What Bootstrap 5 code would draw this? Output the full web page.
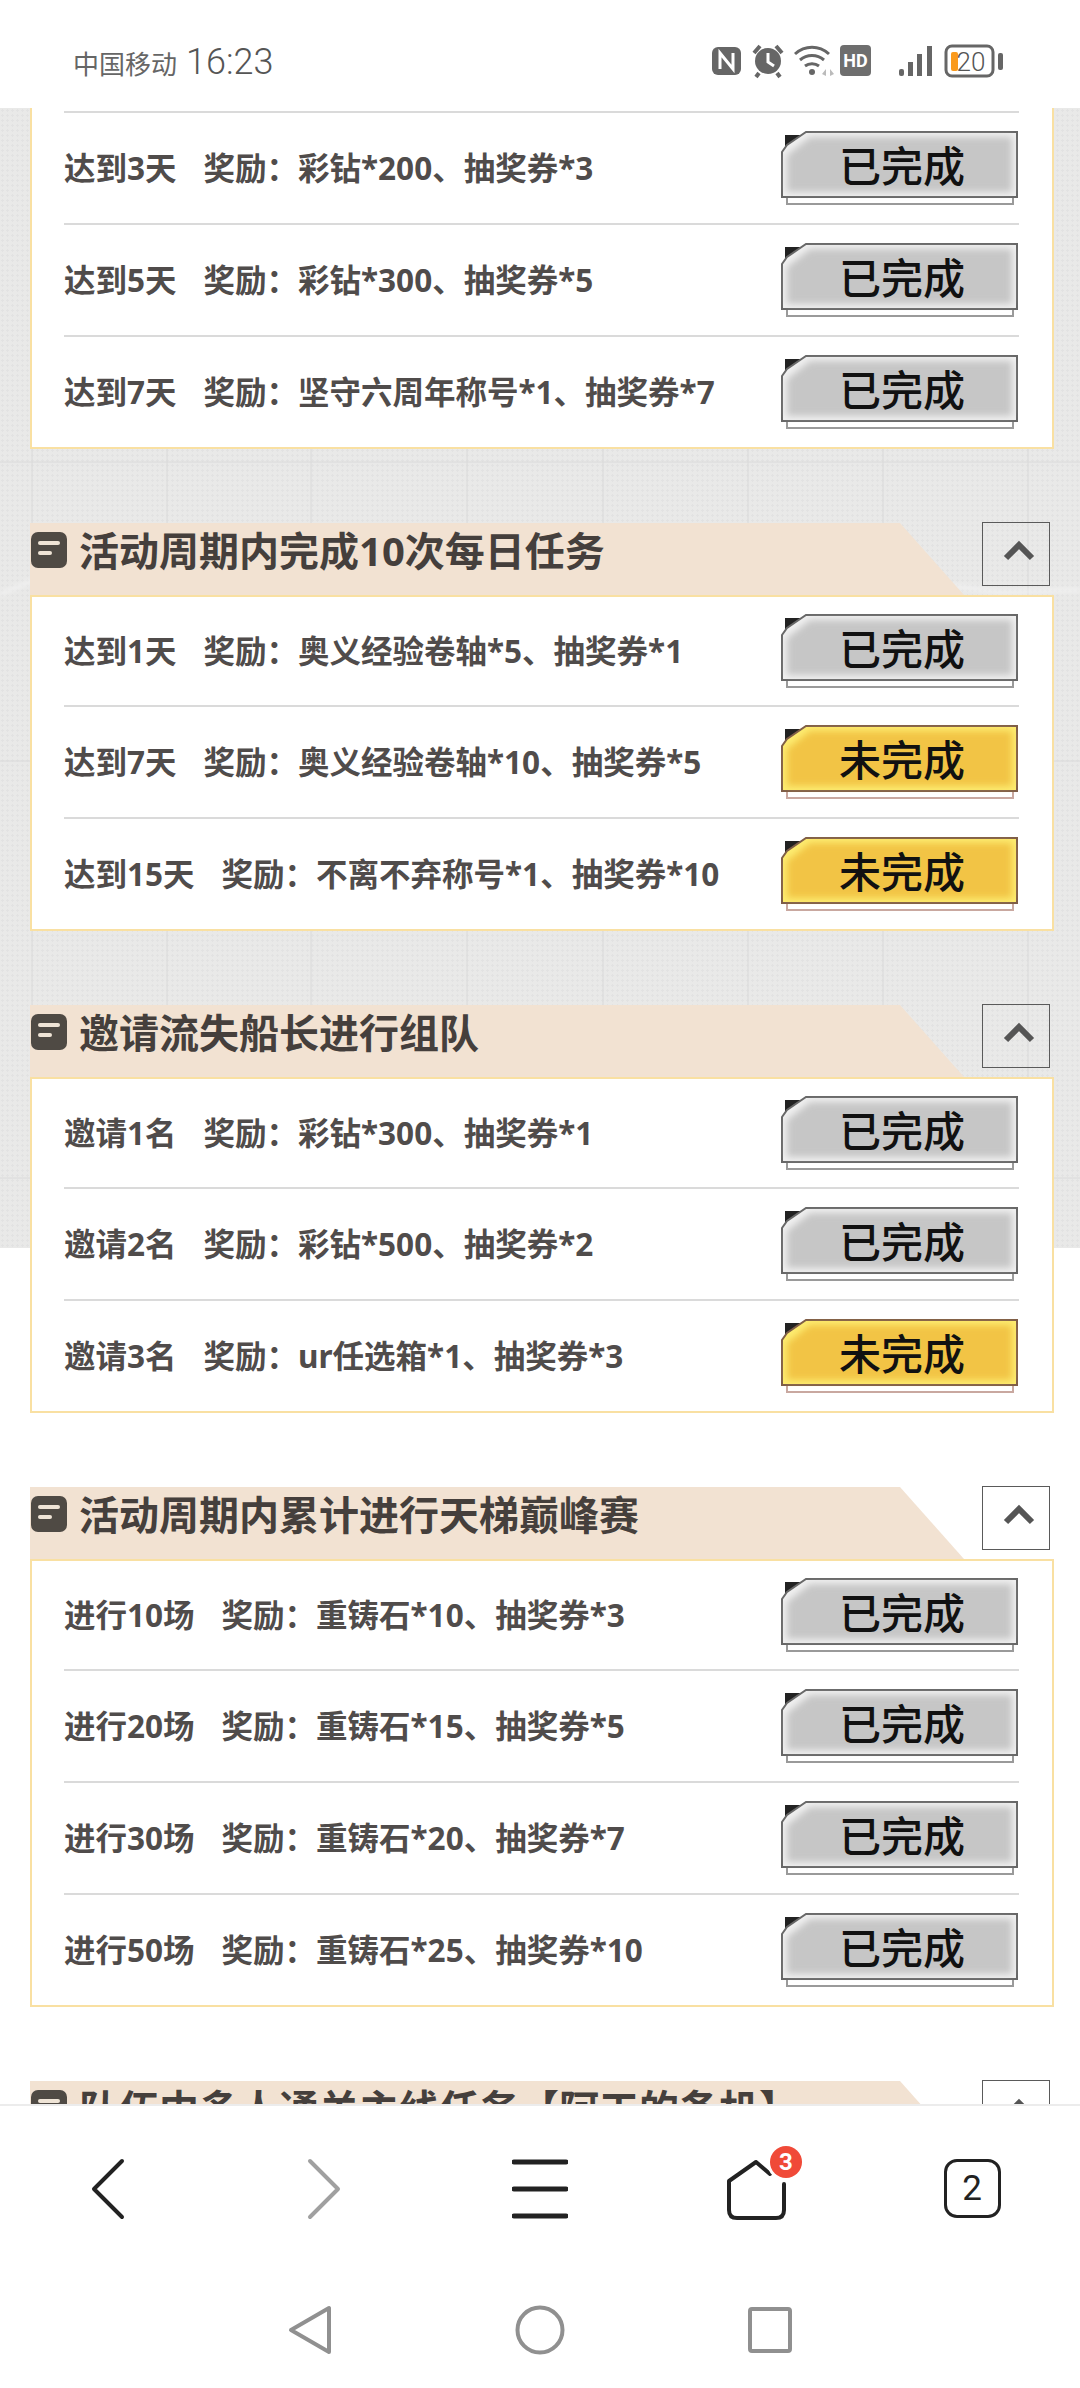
<!DOCTYPE html>
<html lang="zh">
<head>
<meta charset="UTF-8">
<title>活动任务</title>
<link href="https://cdn.jsdelivr.net/npm/bootstrap@5.3.0/dist/css/bootstrap.min.css" rel="stylesheet">
<style>
    html, body { width: 1080px; height: 2388px; overflow: hidden; background: #fff; }
    body { font-family: "Noto Sans", "Noto Sans CJK SC", sans-serif; color: #4a4644; }

    /* status bar */
    .status-bar { height: 108px; background: #fff; position: relative; z-index: 2; padding: 0 77px 0 73px; color: #666; }
    .status-left { margin-top: 16px; }
    .status-right { margin-top: 14px; display: block; }
    .carrier { font-size: 26px; font-family: "Noto Sans CJK SC", sans-serif; margin-right: 9px; }
    .clock { font-size: 36px; line-height: 40px; font-family: Roboto, sans-serif; font-weight: 300; color: #555; }

    /* scrolled page */
    .page-view { height: 1996px; position: relative; overflow: hidden; background: #fff; }
    .paper-bg {
        position: absolute; left: 0; right: 0; top: 0; height: 1140px;
        background-color: #e9e9e8;
        background-image: radial-gradient(#e2e2e2 1.200px, transparent 1.300px);
        background-size: 5px 5px;
    }
    .paper-lines { position: absolute; left: 0; top: 0; }
    .task-list { position: relative; }
    .sec-head { height: 72px; padding-left: 30px; }
    .sec-band {
        width: 934px; height: 72px; background: #f2e2d2;
        clip-path: polygon(0 0, 870px 0, 934px 72px, 0 72px);
        padding: 8px 0 0 1px; overflow: hidden; white-space: nowrap;
    }
    .sec-icon { width: 36px; height: 36px; border-radius: 7px; background: #4f4a44; margin-right: 12px; flex-shrink: 0; margin-top: 1px; padding: 9px 7px 0; }
    .sec-icon i { display: block; height: 4px; border-radius: 2px; background: #efe4d6; margin-bottom: 6px; }
    .sec-icon i + i { width: 14px; }
    .sec-title { font-size: 40px; font-weight: 700; line-height: 40px; color: #453f3c; }
    .toggle-box { width: 68px; height: 64px; margin: -1px 0 0 18px; border: 1px solid #5a5a5a; }
    .toggle-box svg { display: block; }
    .task-panel { width: 1024px; margin: 0 26px 74px 30px; background: #fff; border: 2px solid #f9e0a2; padding: 0 33px 0 32px; }
    .task-panel.cut-top { border-top: 0; }
    .sep-only { height: 5px; border-bottom: 2px solid #dadada; }
    .task-row { height: 112px; border-bottom: 2px solid #dadada; }
    .task-panel > .task-row:first-child { height: 110px; }
    .task-panel > .task-row:last-child { height: 110px; border-bottom: 0; }
    .task-panel > .sep-only + .task-row { height: 112px; }
    .task-name { font-size: 31.500px; font-weight: 700; line-height: 40px; color: #504c4b; white-space: nowrap; }
    .task-need { margin-right: 27px; }
    .task-btn { width: 237px; height: 74px; position: relative; font-family: "Noto Sans CJK SC", sans-serif; flex-shrink: 0; margin-right: 1px; }
    .task-btn svg { position: absolute; left: 0; top: 0; }
    .task-btn span { position: relative; display: block; text-align: center; font-size: 42px; line-height: 40px; padding-top: 13px; padding-left: 5px; color: #111; font-weight: 500; }

    /* browser bars */
    .browser-bar { height: 284px; background: #fff; border-top: 2px solid #ececec; position: relative; z-index: 2; }
    .tool-row { height: 165px; }
    .tool-item { width: 216px; }
    .nav-row { height: 117px; }
    .nav-item-box { width: 230px; }
    .tool-badge { position: absolute; left: 43px; top: -14px; width: 32px; height: 32px; border-radius: 50%; background: #f04a38; color: #fff; font: 700 24px/32px Roboto, sans-serif; text-align: center; box-shadow: 0 0 0 3px #fff; }
    .tab-count { width: 57px; height: 59px; border: 3px solid #222; border-radius: 13px; font: 400 35px/53px Roboto, sans-serif; color: #222; text-align: center; }
    .home-wrap { width: 58px; height: 58px; position: relative; }
</style>
</head>
<body>

<svg width="0" height="0" class="position-absolute">
    <defs>
        <filter id="softEdge" x="-10%" y="-20%" width="120%" height="140%"><feGaussianBlur stdDeviation="3.500"/></filter>
        <symbol id="btnDone" viewBox="0 0 237 74">
            <path d="M6 66H232V73H6Z" fill="#fff" stroke="#9a9a9a" stroke-width="2"/>
            <path d="M4 4H25L4 20Z" fill="#222"/>
            <path d="M25 1H236V66H1V21L6 14Z" fill="#f0f0f0" stroke="#666" stroke-width="2"/>
            <path d="M29 6H231V61H6V24Z" fill="#c6c6c6" filter="url(#softEdge)"/>
        </symbol>
        <symbol id="btnTodo" viewBox="0 0 237 74">
            <path d="M6 66H232V73H6Z" fill="#fff" stroke="#c9a8a0" stroke-width="2"/>
            <path d="M4 4H25L4 20Z" fill="#222"/>
            <path d="M25 1H236V66H1V21L6 14Z" fill="#fdec70" stroke="#7d5c48" stroke-width="2"/>
            <path d="M29 6H231V61H6V24Z" fill="#f2c444" filter="url(#softEdge)"/>
        </symbol>
        <symbol id="chevUp" viewBox="0 0 66 62">
            <path d="M23 35L36 22L49 35" fill="none" stroke="#555" stroke-width="6"/>
        </symbol>
        <filter id="tearBlur"><feGaussianBlur stdDeviation="2"/></filter>
    </defs>
</svg>

<div class="status-bar d-flex align-items-center justify-content-between">
    <div class="status-left d-flex align-items-center">
        <span class="carrier">中国移动</span><span class="clock">16:23</span>
    </div>
    <svg class="status-right" width="295" height="36" viewBox="0 0 295 36">
        <!-- NFC -->
        <rect x="4" y="4" width="29" height="28" rx="6" fill="#666"/>
        <path d="M12 26V10L25 26V10" fill="none" stroke="#fff" stroke-width="3"/>
        <!-- alarm -->
        <circle cx="60" cy="18" r="13" fill="#666"/>
        <path d="M60 10V19L66 23" fill="none" stroke="#fff" stroke-width="3"/>
        <path d="M46 10L52 3M74 10L68 3M51 30L48 34M69 30L72 34" stroke="#666" stroke-width="4" fill="none"/>
        <!-- wifi -->
        <path d="M87 11C97 2 111 2 121 11M92 17C99 11 109 11 116 17M97 23C101 20 107 20 111 23" fill="none" stroke="#666" stroke-width="3"/>
        <circle cx="104" cy="29" r="3" fill="#666"/>
        <path d="M114 31L118 26V33ZM122 26L126 31L122 33Z" fill="#bbb"/>
        <!-- HD -->
        <rect x="132" y="2" width="31" height="31" rx="4" fill="#6e6e6e"/>
        <text x="147.500" y="24" font-family="Roboto, sans-serif" font-weight="700" font-size="18" fill="#fff" text-anchor="middle">HD</text>
        <!-- signal -->
        <g fill="#666"><rect x="191" y="26" width="5" height="7" rx="2"/><rect x="200" y="19" width="5" height="14"/><rect x="209" y="11" width="5" height="22"/><rect x="219" y="3" width="5" height="30"/></g>
        <!-- battery -->
        <rect x="238" y="3" width="47" height="30" rx="6" fill="none" stroke="#666" stroke-width="3"/>
        <rect x="243" y="9" width="7" height="19" rx="2" fill="#fa9a1c"/>
        <text x="263" y="28" font-family="Roboto, sans-serif" font-weight="300" font-size="26" fill="#555" text-anchor="middle">20</text>
        <rect x="290" y="10" width="5" height="17" rx="2" fill="#666"/>
    </svg>
</div>

<div class="page-view">
    <div class="paper-bg"></div>
    <!-- faint ruled lines and the torn streak of the paper texture -->
    <svg class="paper-lines" width="1080" height="1140" viewBox="0 0 1080 1140">
        <g stroke="#dadada" stroke-width="1">
            <path d="M32 0V1140M167 0V1140M311 0V1140M467 0V1140M603 0V1140M748 0V1140M883 0V1140M1028 0V1140"/>
            <path d="M0 354H1080M0 653H1080M0 1070H1080"/>
        </g>
        <path d="M0 486L40 470L100 450M950 478L1000 484L1080 482" fill="none" stroke="#f1f1f1" stroke-width="4" filter="url(#tearBlur)"/>
    </svg>
    <div class="task-list">

        <div class="task-panel cut-top">
            <div class="sep-only"></div>
            <div class="task-row d-flex align-items-center justify-content-between">
                <div class="task-name"><span class="task-need">达到3天</span>奖励：彩钻*200、抽奖券*3</div>
                <div class="task-btn"><svg width="237" height="74"><use href="#btnDone"/></svg><span>已完成</span></div>
            </div>
            <div class="task-row d-flex align-items-center justify-content-between">
                <div class="task-name"><span class="task-need">达到5天</span>奖励：彩钻*300、抽奖券*5</div>
                <div class="task-btn"><svg width="237" height="74"><use href="#btnDone"/></svg><span>已完成</span></div>
            </div>
            <div class="task-row d-flex align-items-center justify-content-between">
                <div class="task-name"><span class="task-need">达到7天</span>奖励：坚守六周年称号*1、抽奖券*7</div>
                <div class="task-btn"><svg width="237" height="74"><use href="#btnDone"/></svg><span>已完成</span></div>
            </div>
        </div>

        <div class="sec-head d-flex">
            <div class="sec-band d-flex"><div class="sec-icon"><i></i><i></i></div><div class="sec-title">活动周期内完成10次每日任务</div></div>
            <div class="toggle-box"><svg width="66" height="62"><use href="#chevUp"/></svg></div>
        </div>
        <div class="task-panel">
            <div class="task-row d-flex align-items-center justify-content-between">
                <div class="task-name"><span class="task-need">达到1天</span>奖励：奥义经验卷轴*5、抽奖券*1</div>
                <div class="task-btn"><svg width="237" height="74"><use href="#btnDone"/></svg><span>已完成</span></div>
            </div>
            <div class="task-row d-flex align-items-center justify-content-between">
                <div class="task-name"><span class="task-need">达到7天</span>奖励：奥义经验卷轴*10、抽奖券*5</div>
                <div class="task-btn"><svg width="237" height="74"><use href="#btnTodo"/></svg><span>未完成</span></div>
            </div>
            <div class="task-row d-flex align-items-center justify-content-between">
                <div class="task-name"><span class="task-need">达到15天</span>奖励：不离不弃称号*1、抽奖券*10</div>
                <div class="task-btn"><svg width="237" height="74"><use href="#btnTodo"/></svg><span>未完成</span></div>
            </div>
        </div>

        <div class="sec-head d-flex">
            <div class="sec-band d-flex"><div class="sec-icon"><i></i><i></i></div><div class="sec-title">邀请流失船长进行组队</div></div>
            <div class="toggle-box"><svg width="66" height="62"><use href="#chevUp"/></svg></div>
        </div>
        <div class="task-panel">
            <div class="task-row d-flex align-items-center justify-content-between">
                <div class="task-name"><span class="task-need">邀请1名</span>奖励：彩钻*300、抽奖券*1</div>
                <div class="task-btn"><svg width="237" height="74"><use href="#btnDone"/></svg><span>已完成</span></div>
            </div>
            <div class="task-row d-flex align-items-center justify-content-between">
                <div class="task-name"><span class="task-need">邀请2名</span>奖励：彩钻*500、抽奖券*2</div>
                <div class="task-btn"><svg width="237" height="74"><use href="#btnDone"/></svg><span>已完成</span></div>
            </div>
            <div class="task-row d-flex align-items-center justify-content-between">
                <div class="task-name"><span class="task-need">邀请3名</span>奖励：ur任选箱*1、抽奖券*3</div>
                <div class="task-btn"><svg width="237" height="74"><use href="#btnTodo"/></svg><span>未完成</span></div>
            </div>
        </div>

        <div class="sec-head d-flex">
            <div class="sec-band d-flex"><div class="sec-icon"><i></i><i></i></div><div class="sec-title">活动周期内累计进行天梯巅峰赛</div></div>
            <div class="toggle-box"><svg width="66" height="62"><use href="#chevUp"/></svg></div>
        </div>
        <div class="task-panel">
            <div class="task-row d-flex align-items-center justify-content-between">
                <div class="task-name"><span class="task-need">进行10场</span>奖励：重铸石*10、抽奖券*3</div>
                <div class="task-btn"><svg width="237" height="74"><use href="#btnDone"/></svg><span>已完成</span></div>
            </div>
            <div class="task-row d-flex align-items-center justify-content-between">
                <div class="task-name"><span class="task-need">进行20场</span>奖励：重铸石*15、抽奖券*5</div>
                <div class="task-btn"><svg width="237" height="74"><use href="#btnDone"/></svg><span>已完成</span></div>
            </div>
            <div class="task-row d-flex align-items-center justify-content-between">
                <div class="task-name"><span class="task-need">进行30场</span>奖励：重铸石*20、抽奖券*7</div>
                <div class="task-btn"><svg width="237" height="74"><use href="#btnDone"/></svg><span>已完成</span></div>
            </div>
            <div class="task-row d-flex align-items-center justify-content-between">
                <div class="task-name"><span class="task-need">进行50场</span>奖励：重铸石*25、抽奖券*10</div>
                <div class="task-btn"><svg width="237" height="74"><use href="#btnDone"/></svg><span>已完成</span></div>
            </div>
        </div>

        <div class="sec-head d-flex">
            <div class="sec-band d-flex"><div class="sec-icon"><i></i><i></i></div><div class="sec-title">队伍中多人通关主线任务【阿工的备机】</div></div>
            <div class="toggle-box"><svg width="66" height="62"><use href="#chevUp"/></svg></div>
        </div>
    </div>
</div>

<div class="browser-bar">
    <div class="tool-row d-flex align-items-center">
        <div class="tool-item d-flex justify-content-center">
            <svg width="34" height="62" viewBox="0 0 34 62"><path d="M31 3L3 31L31 59" fill="none" stroke="#222" stroke-width="4" stroke-linecap="round" stroke-linejoin="round"/></svg>
        </div>
        <div class="tool-item d-flex justify-content-center">
            <svg width="34" height="62" viewBox="0 0 34 62"><path d="M3 3L31 31L3 59" fill="none" stroke="#a0a0a0" stroke-width="4" stroke-linecap="round" stroke-linejoin="round"/></svg>
        </div>
        <div class="tool-item d-flex justify-content-center">
            <svg width="56" height="60" viewBox="0 0 56 60"><path d="M2 3H54M2 30H54M2 57H54" stroke="#222" stroke-width="5" stroke-linecap="round"/></svg>
        </div>
        <div class="tool-item d-flex justify-content-center">
            <div class="home-wrap">
                <svg width="60" height="60" viewBox="0 0 60 60"><path d="M43 14L29 2L2 21V50Q2 58 10 58H49Q57 58 57 50V24" fill="none" stroke="#222" stroke-width="4" stroke-linejoin="round" stroke-linecap="round"/></svg>
                <div class="tool-badge">3</div>
            </div>
        </div>
        <div class="tool-item d-flex justify-content-center">
            <div class="tab-count">2</div>
        </div>
    </div>
    <div class="nav-row d-flex align-items-center justify-content-center">
        <div class="nav-item-box d-flex justify-content-center">
            <svg width="44" height="50" viewBox="0 0 44 50"><path d="M41 3V47L3 25Z" fill="none" stroke="#909090" stroke-width="4" stroke-linejoin="round"/></svg>
        </div>
        <div class="nav-item-box d-flex justify-content-center">
            <svg width="50" height="50" viewBox="0 0 50 50"><circle cx="25" cy="25" r="22.500" fill="none" stroke="#909090" stroke-width="4"/></svg>
        </div>
        <div class="nav-item-box d-flex justify-content-center">
            <svg width="44" height="46" viewBox="0 0 44 46"><rect x="2" y="2" width="40" height="42" rx="2" fill="none" stroke="#909090" stroke-width="4"/></svg>
        </div>
    </div>
</div>

<script src="https://cdn.jsdelivr.net/npm/bootstrap@5.3.0/dist/js/bootstrap.bundle.min.js"></script>
</body>
</html>
